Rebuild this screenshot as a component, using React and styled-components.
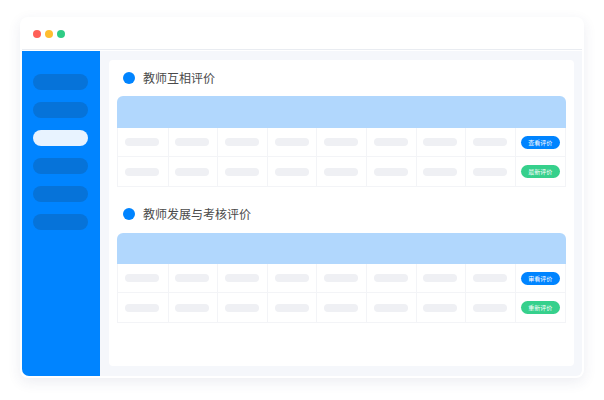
import React from 'react'
import styled, { createGlobalStyle } from 'styled-components'

const sections = [
  { title: '教师互相评价', headHeight: 32, actions: [['查看评价', 'blue'], ['最新评价', 'green']] },
  { title: '教师发展与考核评价', headHeight: 31, actions: [['审看评价', 'blue'], ['重新评价', 'green']] },
]
const menu = [false, false, true, false, false, false]
const dots = ['#ff5f57', '#ffbd2e', '#2ecc85']
const placeholders = [0, 1, 2, 3, 4, 5, 6, 7]

const App = () => {
  return (
    <Page>
      <GlobalStyle />
      <Window>
        <TitleBar>
          {dots.map((color) => <Dot key={color} color={color} />)}
        </TitleBar>
        <Body>
          <Sidebar>
            {menu.map((active, i) => <MenuPill key={i} $active={active} />)}
          </Sidebar>
          <Main>
            <Card>
              {sections.map((section) => (
                <Section key={section.title}>
                  <Heading>
                    <Bullet />
                    <h2>{section.title}</h2>
                  </Heading>
                  <Table>
                    <TableHead $height={section.headHeight} />
                    {section.actions.map(([label, tone]) => (
                      <Row key={label}>
                        {placeholders.map((n) => (
                          <Cell key={n}><Skeleton /></Cell>
                        ))}
                        <Cell>
                          <ActionButton $tone={tone}>{label}</ActionButton>
                        </Cell>
                      </Row>
                    ))}
                  </Table>
                </Section>
              ))}
            </Card>
          </Main>
        </Body>
      </Window>
    </Page>
  )
}

export default App

const GlobalStyle = createGlobalStyle`
html,body{
    margin:0;
    padding:0;
    background:#fff;
}
`

const Page = styled.div`
width:604px;
height:400px;
box-sizing:border-box;
padding:17px 20px 22px 20px;
overflow:hidden;
font-family:"Noto Sans CJK SC","Noto Sans",sans-serif;
`

const Window = styled.div`
width:564px;
height:361px;
box-sizing:border-box;
display:flex;
flex-direction:column;
background:#fff;
border-radius:8px;
padding:0 2px 2px 2px;
box-shadow:0 4px 14px rgba(40,60,110,.09);
`

const TitleBar = styled.div`
height:33px;
flex-shrink:0;
box-sizing:border-box;
display:flex;
align-items:center;
gap:4px;
padding:1px 0 0 11px;
border-bottom:1px solid #e9ecf1;
`

const Dot = styled.span`
width:8px;
height:8px;
border-radius:50%;
background:${(props) => props.color};
`

const Body = styled.div`
flex:1;
display:flex;
min-height:0;
margin-top:1px;
`

const Sidebar = styled.div`
width:78px;
flex-shrink:0;
box-sizing:border-box;
display:flex;
flex-direction:column;
align-items:flex-start;
gap:12px;
padding:23px 0 0 11px;
background:#0084ff;
border-bottom-left-radius:7px;
`

const MenuPill = styled.div`
width:55px;
height:16px;
border-radius:8px;
background:${(props) => (props.$active ? '#e8f3ff' : '#0673d9')};
`

const Main = styled.div`
flex:1;
box-sizing:border-box;
padding:9px 8px 10px 9px;
background:#f5f7fb;
border-bottom-right-radius:6px;
`

const Card = styled.div`
height:100%;
box-sizing:border-box;
padding:0 8px;
background:#fff;
border-radius:4px;
`

const Section = styled.div`
padding-bottom:9px;
& + & > div:last-child{
    margin-top:1px;
}
`

const Heading = styled.div`
height:36px;
display:flex;
align-items:center;
padding-left:6px;
h2{
    margin:0 0 0 8px;
    font-size:12px;
    font-weight:400;
    color:#4a4a4a;
    line-height:36px;
}
`

const Bullet = styled.span`
width:12px;
height:12px;
border-radius:50%;
background:#0084ff;
`

const Table = styled.div`
width:449px;
`

const TableHead = styled.div`
height:${(props) => props.$height}px;
background:#b1d7fd;
border-radius:6px 6px 0 0;
`

const Row = styled.div`
display:grid;
grid-template-columns:repeat(8,49.6px) 1fr;
height:29px;
box-sizing:border-box;
border:1px solid #f3f4f7;
border-top:none;
&:last-child{
    height:30px;
}
`

const Cell = styled.div`
display:flex;
align-items:center;
justify-content:center;
border-left:1px solid #f3f4f7;
&:first-child{
    border-left:none;
}
`

const Skeleton = styled.div`
width:34px;
height:8px;
margin-right:1px;
border-radius:4px;
background:#eff0f4;
`

const ActionButton = styled.div`
width:39px;
height:13px;
display:flex;
align-items:center;
justify-content:center;
border-radius:7px;
font-size:6px;
line-height:13px;
color:#fff;
background:${(props) => (props.$tone === 'green' ? '#36d08c' : '#0084ff')};
`
